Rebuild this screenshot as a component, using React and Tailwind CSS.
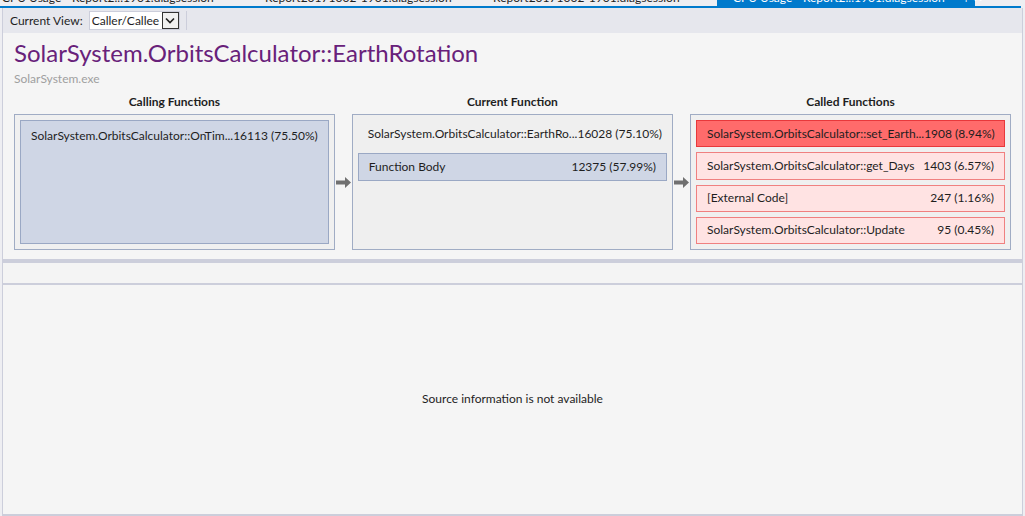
const font = { fontFamily: 'Lato, "Open Sans", sans-serif' };

function Arrow() {
  return (
    <div className="w-[17px] flex items-center justify-center">
      <svg width="15" height="11" viewBox="0 0 15 11">
        <path d="M0 3.5h9V0l6 5.5-6 5.5V7.5H0z" fill="#707070" />
      </svg>
    </div>
  );
}

function Row({ name, value, hot, body }) {
  let cls = "border-[#f08080] bg-[#ffe3e3]";
  if (hot) cls = "border-[#e8383b] bg-[#ff6b6b]";
  if (body) cls = "border-[#9aa8c4] bg-[#cfd6e5]";
  return (
    <div className={`h-[28px] border flex items-center justify-between pl-[10px] pr-[10px] text-[12px] whitespace-nowrap text-[#1e1e1e] ${cls}`}>
      <span>{name}</span>
      <span>{value}</span>
    </div>
  );
}

export default function App() {
  return (
    <div className="w-[1025px] h-[516px] overflow-hidden bg-[#eeeef2] flex flex-col text-[#1e1e1e]" style={font}>
      {/* clipped tab strip */}
      <div className="h-[6px] flex overflow-hidden text-[12px] leading-[14px] text-[#1e1e1e]">
        <div className="w-[265px] pl-[2px] -mt-[9px] whitespace-nowrap">CPU Usage - Report2...1901.diagsession</div>
        <div className="w-[228px] -mt-[9px] whitespace-nowrap">Report20171002-1901.diagsession</div>
        <div className="w-[224px] -mt-[9px] whitespace-nowrap">Report20171002-1901.diagsession</div>
        <div className="w-[258px] bg-[#007acc] text-white pl-[16px] whitespace-nowrap">
          <div className="-mt-[9px]">CPU Usage - Report2...1901.diagsession&nbsp;&nbsp;&nbsp;&nbsp;⊣&nbsp;&nbsp;✕</div>
        </div>
        <div className="pl-[18px] -mt-[9px] text-[#8a8a8a]">··</div>
      </div>
      <div className="w-[1021px] h-[2px] bg-[#007acc]" />

      <div className="w-[1021px] ml-[2px] flex-1 flex flex-col border-l border-r border-[#cccedb] bg-[#f5f5f5]">
        {/* toolbar */}
        <div className="h-[25px] bg-[#e6e7ed] flex items-center pl-[7px] text-[12px]">
          <span className="text-[#1e1e1e]">Current View:</span>
          <div className="ml-[6px] h-[19px] w-[91px] flex border border-[#cccedb] bg-white">
            <span className="flex-1 pl-[2px] leading-[17px] whitespace-nowrap">Caller/Callee</span>
            <div className="w-[17px] border border-[#333] flex items-center justify-center bg-[#f0f0f0]">
              <svg width="10" height="7" viewBox="0 0 10 7">
                <path d="M1 1.5l4 4 4-4" stroke="#1e1e1e" strokeWidth="1.6" fill="none" />
              </svg>
            </div>
          </div>
          <div className="ml-[6px] w-px h-[19px] bg-[#cccedb]" />
        </div>

        <div className="px-[11px]">
          <div className="text-[24px] leading-[32px] mt-[4px] text-[#68217a]">SolarSystem.OrbitsCalculator::EarthRotation</div>
          <div className="text-[12px] leading-[16px] text-[#a0a0a0] mt-[2px]">SolarSystem.exe</div>

          <div className="flex mt-[8px] text-[12px]">
            <div className="w-[321px] flex flex-col">
              <div className="text-center font-bold leading-[14px] h-[19px]">Calling Functions</div>
              <div className="h-[136px] border border-[#a0acc4] bg-[#f0f0f0] p-[5px]">
                <div className="h-full border border-[#9aa8c4] bg-[#cfd6e5] pl-[10px] pr-[10px] pt-[6px] flex justify-between whitespace-nowrap">
                  <span>SolarSystem.OrbitsCalculator::OnTim...</span>
                  <span>16113 (75.50%)</span>
                </div>
              </div>
            </div>
            <div className="flex flex-col">
              <div className="h-[19px]" />
              <div className="h-[136px] flex items-center"><Arrow /></div>
            </div>
            <div className="w-[322px] flex flex-col">
              <div className="text-center font-bold leading-[14px] h-[19px]">Current Function</div>
              <div className="h-[136px] border border-[#a0acc4] bg-[#efefef] px-[5px]">
                <div className="h-[38px] flex items-center justify-between pl-[10px] pr-[5px] whitespace-nowrap">
                  <span>SolarSystem.OrbitsCalculator::EarthRo...</span>
                  <span>16028 (75.10%)</span>
                </div>
                <Row name="Function Body" value="12375 (57.99%)" body />
              </div>
            </div>
            <div className="flex flex-col">
              <div className="h-[19px]" />
              <div className="h-[136px] flex items-center"><Arrow /></div>
            </div>
            <div className="w-[321px] flex flex-col">
              <div className="text-center font-bold leading-[14px] h-[19px]">Called Functions</div>
              <div className="h-[136px] border border-[#a0acc4] bg-[#f0f0f0] p-[5px] flex flex-col gap-[5px]">
                <Row name="SolarSystem.OrbitsCalculator::set_Earth..." value="1908 (8.94%)" hot />
                <Row name="SolarSystem.OrbitsCalculator::get_Days" value="1403 (6.57%)" />
                <Row name="[External Code]" value="247 (1.16%)" />
                <Row name="SolarSystem.OrbitsCalculator::Update" value="95 (0.45%)" />
              </div>
            </div>
          </div>
        </div>

        <div className="mt-[9px] h-[4px] bg-[#cccedb]" />
        <div className="h-[22px] border-b-2 border-[#cccedb] bg-[#f4f4f4]" />
        <div className="flex-1 flex items-center justify-center text-[12px] pb-[2px]">Source information is not available</div>
        <div className="h-[2px] bg-[#cccedb]" />
      </div>
    </div>
  );
}
